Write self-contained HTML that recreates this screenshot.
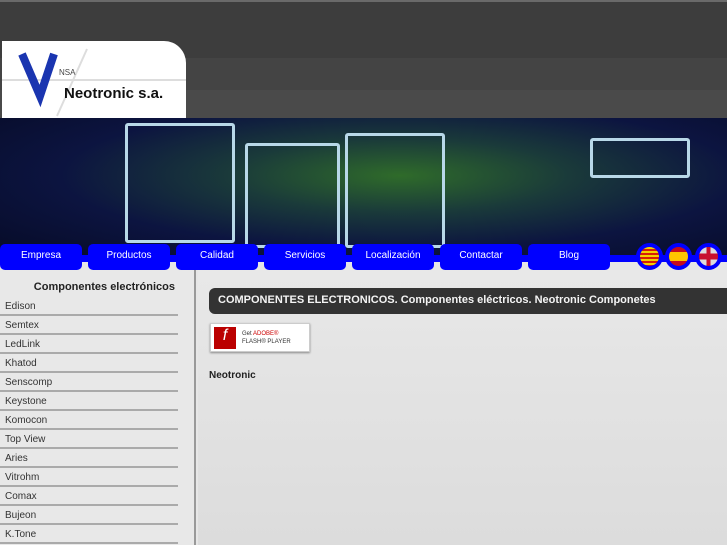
<!DOCTYPE html>
<html><head><meta charset="utf-8"><style>
*{margin:0;padding:0;box-sizing:border-box}
body{width:727px;height:545px;overflow:hidden;font-family:"Liberation Sans",sans-serif;background:#e6e6e6;position:relative}
.top{position:absolute;left:0;top:0;width:727px;height:118px;background:#3d3d3d;border-top:2px solid #6a6a6a}
.top .b2{position:absolute;left:0;top:56px;width:727px;height:32px;background:#444}
.top .b3{position:absolute;left:0;top:88px;width:727px;height:30px;background:#4a4a4a}
.logo{position:absolute;left:2px;top:41px;width:184px;height:80px;background:#fff;border-radius:0 22px 0 0;overflow:hidden}
.logo .line{position:absolute;left:0;top:38px;width:184px;height:2px;background:#ddd}
.banner{position:absolute;left:0;top:118px;width:727px;height:144px;background:radial-gradient(ellipse at 55% 40%,#2f6b2a 0,#1a3a3a 30%,#0c1440 60%,#060a24 100%)}
.chip{position:absolute;border:3px solid #b8d8e8;border-radius:3px}
.navbar{position:absolute;left:0;top:255px;width:727px;height:7px;background:#0000ff}
.nav{position:absolute;top:244px;height:26px;background:#0000ff;border-radius:5px;color:#fff;font-size:10px;text-align:center;line-height:24px}
.flag{position:absolute;top:243px;width:27px;height:27px;border-radius:50%;background:#0000ff;padding:4px}
.flag i{display:block;width:19px;height:19px;border-radius:50%}
.side{position:absolute;left:0;top:270px;width:196px;height:275px;background:#e8e8e8;border-right:2px solid #999}
.side h3{font-size:11px;text-align:right;padding-right:19px;margin-top:11px;color:#222;height:16px}
.side div{width:178px;height:19px;border-bottom:2px solid #aaa;font-size:10px;color:#333;padding-left:5px;line-height:19px}
.title{position:absolute;left:209px;top:288px;width:518px;height:26px;background:#333;border-radius:6px 0 0 6px;color:#f4f4f4;font-weight:bold;font-size:11px;line-height:25px;padding-left:9px}
.flash{position:absolute;left:210px;top:323px;width:100px;height:29px;background:#fff;border:1px solid #ccc;box-shadow:0 1px 2px #888}
.content{position:absolute;left:198px;top:270px;width:529px;height:275px;background:linear-gradient(#e8e8e8,#dcdcdc)}
</style></head><body>
<div class="top"><div class="b2"></div><div class="b3"></div></div>
<div class="logo">
<div class="line"></div>
<svg width="184" height="80" style="position:absolute;left:0;top:0">
<path d="M20 13 L38 55 L52 13" stroke="#1a35b0" stroke-width="8" fill="none"/>
<path d="M85 8 L55 75" stroke="#ddd" stroke-width="2"/>
<text x="57" y="34" font-size="8" fill="#444" font-family="Liberation Sans">NSA</text>
<text x="62" y="57" font-size="15" font-weight="bold" fill="#111" font-family="Liberation Sans">Neotronic s.a.</text>
</svg></div>
<div class="banner">
<div class="chip" style="left:125px;top:5px;width:110px;height:120px"></div>
<div class="chip" style="left:245px;top:25px;width:95px;height:105px"></div>
<div class="chip" style="left:345px;top:15px;width:100px;height:115px"></div>
<div class="chip" style="left:590px;top:20px;width:100px;height:40px"></div>
</div>
<div class="navbar"></div>
<div class="nav" style="left:0;width:82px">Empresa</div>
<div class="nav" style="left:88px;width:82px">Productos</div>
<div class="nav" style="left:176px;width:82px">Calidad</div>
<div class="nav" style="left:264px;width:82px">Servicios</div>
<div class="nav" style="left:352px;width:82px">Localización</div>
<div class="nav" style="left:440px;width:82px">Contactar</div>
<div class="nav" style="left:528px;width:82px">Blog</div>
<div class="flag" style="left:636px"><i style="background:repeating-linear-gradient(#f5d000 0 2px,#d81e05 2px 4px)"></i></div>
<div class="flag" style="left:665px"><i style="background:linear-gradient(#c60b1e 25%,#ffc400 25% 75%,#c60b1e 75%)"></i></div>
<div class="flag" style="left:695px"><i style="background:linear-gradient(90deg,transparent 40%,#c8102e 40% 60%,transparent 60%),linear-gradient(#ddd 35%,#c8102e 35% 65%,#ddd 65%)"></i></div>
<div class="content"></div>
<div class="side"><h3>Componentes electrónicos</h3>
<div>Edison</div><div>Semtex</div><div>LedLink</div><div>Khatod</div><div>Senscomp</div><div>Keystone</div><div>Komocon</div><div>Top View</div><div>Aries</div><div>Vitrohm</div><div>Comax</div><div>Bujeon</div><div>K.Tone</div></div>
<div class="title">COMPONENTES ELECTRONICOS. Componentes eléctricos. Neotronic Componetes</div>
<div class="flash"><div style="position:absolute;left:3px;top:3px;width:22px;height:22px;background:#b00;color:#fff;font-style:italic;font-size:16px;text-align:center">f</div>
<div style="position:absolute;left:31px;top:6px;font-size:6px;color:#333;line-height:8px">Get <span style="color:#c00">ADOBE®</span><br>FLASH® PLAYER</div></div>
<div style="position:absolute;left:209px;top:370px;font-size:10px;font-weight:bold;color:#222">Neotronic</div>
</body></html>
